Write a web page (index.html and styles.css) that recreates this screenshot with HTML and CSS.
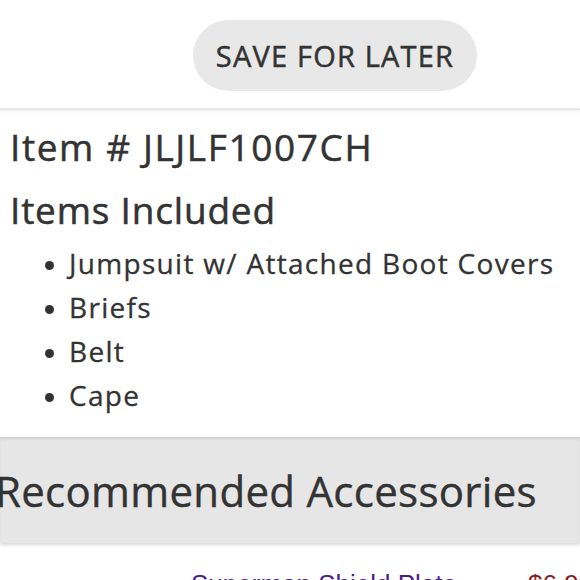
FILE: index.html
```html
<!DOCTYPE html>
<html lang="en">
<head>
  <meta charset="UTF-8" />
  <meta name="viewport" content="width=device-width, initial-scale=1.0"/>
  <title>Item Details</title>
  <link rel="stylesheet" href="styles.css">
</head>
<body>
  <div class="actions">
    <button class="save-btn">SAVE FOR LATER</button>
  </div>

  <div class="details">
    <h2 class="item-no">Item # JLJLF1007CH</h2>
    <h2 class="included-title">Items Included</h2>
    <ul class="included">
      <li>Jumpsuit w/ Attached Boot Covers</li>
      <li>Briefs</li>
      <li>Belt</li>
      <li>Cape</li>
    </ul>
  </div>

  <div class="accessories">
    <h2>Recommended Accessories</h2>
  </div>

  <div class="accessory-row">
    <a href="#" class="accessory-name">Superman Shield Plate</a>
    <span class="accessory-price">$6.99</span>
  </div>
</body>
</html>
```

FILE: styles.css
```css
body {
  margin: 0;
  font-family: "Open Sans", Lato, sans-serif;
  color: #333;
  background: #fff;
  overflow: hidden;
  width: 580px;
  height: 580px;
}

.actions {
  padding: 20px 0 0 193px;
  height: 110px;
  box-sizing: border-box;
  border-bottom: 2px solid #e6e6e6;
  box-shadow: 0 1px 3px rgba(0,0,0,0.08);
}

.save-btn {
  width: 284px;
  height: 71px;
  border: none;
  border-radius: 36px;
  background: #e8e8e8;
  color: #333;
  font-family: "Open Sans", sans-serif;
  font-size: 29px;
  font-weight: 400;
  letter-spacing: 1.2px;
  -webkit-text-stroke: 0.5px #333;
  padding: 0;
}

.details {
  padding: 15px 0 0 10px;
}

.details h2 {
  margin: 0;
  font-weight: 400;
  font-size: 37px;
  line-height: 44px;
  letter-spacing: 0.8px;
  -webkit-text-stroke: 0.5px #333;
}

.details .item-no {
  margin-bottom: 19px;
  letter-spacing: 1.6px;
}

.included {
  margin: 9px 0 0;
  padding-left: 59px;
  font-size: 28px;
  line-height: 44px;
  letter-spacing: 1.3px;
  -webkit-text-stroke: 0.3px #333;
}

.included li::marker {
  font-size: 24px;
}

.accessories {
  margin-top: 20px;
  height: 106px;
  background: #e6e6e6;
  box-shadow: inset 0 3px 3px -1px rgba(0,0,0,0.1), 0 2px 3px rgba(0,0,0,0.15);
  display: flex;
  align-items: center;
}

.accessories h2 {
  margin: 0 0 0 -5px;
  font-size: 42px;
  font-weight: 400;
  letter-spacing: 0.3px;
  -webkit-text-stroke: 0.4px #333;
  white-space: nowrap;
}

.accessory-row {
  display: flex;
  padding: 26px 0 0 191px;
  font-family: "Liberation Sans", Arial, sans-serif;
  font-size: 26px;
  white-space: nowrap;
}

.accessory-name {
  flex-shrink: 0;
  color: #4b1a8c;
  text-decoration: none;
  width: 337px;
}

.accessory-price {
  flex-shrink: 0;
  color: #8b1a1a;
}
```
